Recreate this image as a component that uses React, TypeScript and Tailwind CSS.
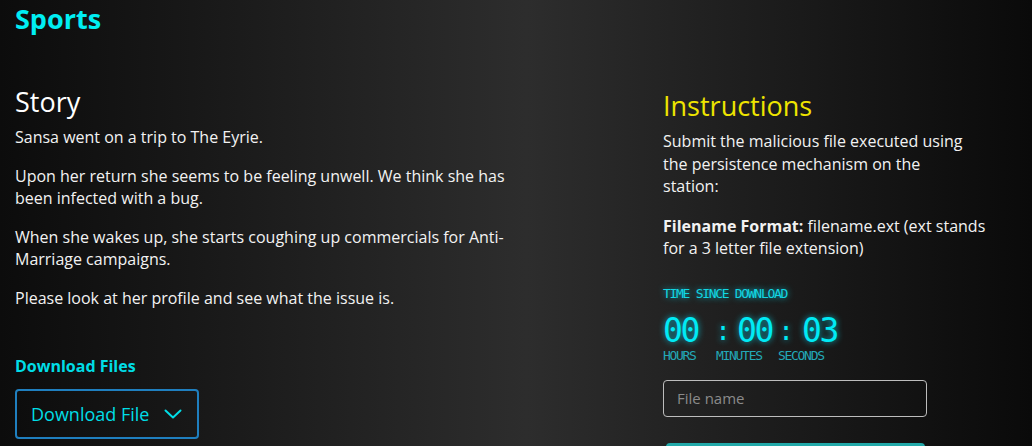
import React from "react";

const glow = "[text-shadow:0_0_6px_rgba(0,230,255,0.75)]";

export default function App() {
    const story = [
        "Sansa went on a trip to The Eyrie.",
        "Upon her return she seems to be feeling unwell. We think she has been infected with a bug.",
        "When she wakes up, she starts coughing up commercials for Anti-Marriage campaigns.",
        "Please look at her profile and see what the issue is.",
    ];

    return (
        <div className="h-screen overflow-hidden bg-[linear-gradient(to_right,#0c0c0c_0%,#2d2d2d_51%,#0a0a0a_100%)] px-[15px] font-['Open_Sans',sans-serif] text-[#f2f2f2]">
            {/* Header */}
            <h1 className="pt-[2px] text-[27px] font-bold leading-[34px] text-[#00eef2]">Sports</h1>

            <div className="mt-[50px] flex">
                {/* Left: story + download */}
                <div className="w-[648px]">
                    <h2 className="text-[27px] leading-[32px] text-white">Story</h2>
                    <div className="mt-2 w-[530px]">
                        {story.map((p, i) => (
                            <p key={i} className={`text-[16px] leading-[22px] ${i < story.length - 1 ? "mb-[17px]" : ""}`}>
                                {p}
                            </p>
                        ))}
                    </div>

                    <h3 className="mt-[46px] text-[16px] font-bold leading-[22px] text-[#00dde6]">Download Files</h3>
                    <button className="mt-3 flex h-[50px] w-[184px] items-center justify-between rounded-[4px] border-2 border-[#1f7fbf] pl-[14px] pr-[15px] text-[18px] text-[#00dde6]">
                        Download File
                        <svg width="18" height="10" viewBox="0 0 18 10" fill="none" stroke="currentColor" strokeWidth="2" strokeLinecap="round" strokeLinejoin="round">
                            <polyline points="1.5,1.5 9,8.5 16.5,1.5" />
                        </svg>
                    </button>
                </div>

                {/* Right: instructions + timer + form */}
                <div className="w-[327px] pt-[4px]">
                    <h2 className="text-[27px] leading-[32px] text-[#eee400]">Instructions</h2>
                    <p className="mt-2 text-[16px] leading-[22.5px]">
                        Submit the malicious file executed using the persistence mechanism on the
                        <br />
                        station:
                    </p>
                    <p className="mt-[17px] text-[16px] leading-[22.5px]">
                        <b>Filename Format:</b> filename.ext (ext stands for a 3 letter file extension)
                    </p>

                    <div className="mt-[26px] font-['DejaVu_Sans_Mono',monospace]">
                        <div className={`text-[13px] leading-[16px] tracking-[-1.3px] text-[#12d6e2] ${glow}`}>TIME SINCE DOWNLOAD</div>
                        <div className={`mt-[12px] flex text-[33px] leading-[34px] text-[#00eaf5] ${glow}`}>
                            <span className="w-[35px] tracking-[-2.3px]">00</span>
                            <span className="ml-[15px] w-[20px] text-center text-[26px]">:</span>
                            <span className="ml-[4px] w-[35px] tracking-[-2.3px]">00</span>
                            <span className="ml-[4px] w-[20px] text-center text-[26px]">:</span>
                            <span className="ml-[6px] w-[35px] tracking-[-2.3px]">03</span>
                        </div>
                        <div className="flex text-[13px] leading-[16px] tracking-[-1.3px] text-[#23a9b8]">
                            <span className="w-[53px]">HOURS</span>
                            <span className="w-[62px]">MINUTES</span>
                            <span>SECONDS</span>
                        </div>
                    </div>

                    <input
                        placeholder="File name"
                        className="mt-[16px] h-[37px] w-[264px] rounded-[4px] border border-[#bdbdbd] bg-transparent px-[13px] text-[15px] text-white outline-none placeholder:text-[#8a8a8a]"
                    />
                    <button className="mt-[26px] ml-[3px] h-[44px] w-[259px] rounded-[4px] bg-[#22a9a9] text-white">Submit</button>
                </div>
            </div>
        </div>
    );
}
